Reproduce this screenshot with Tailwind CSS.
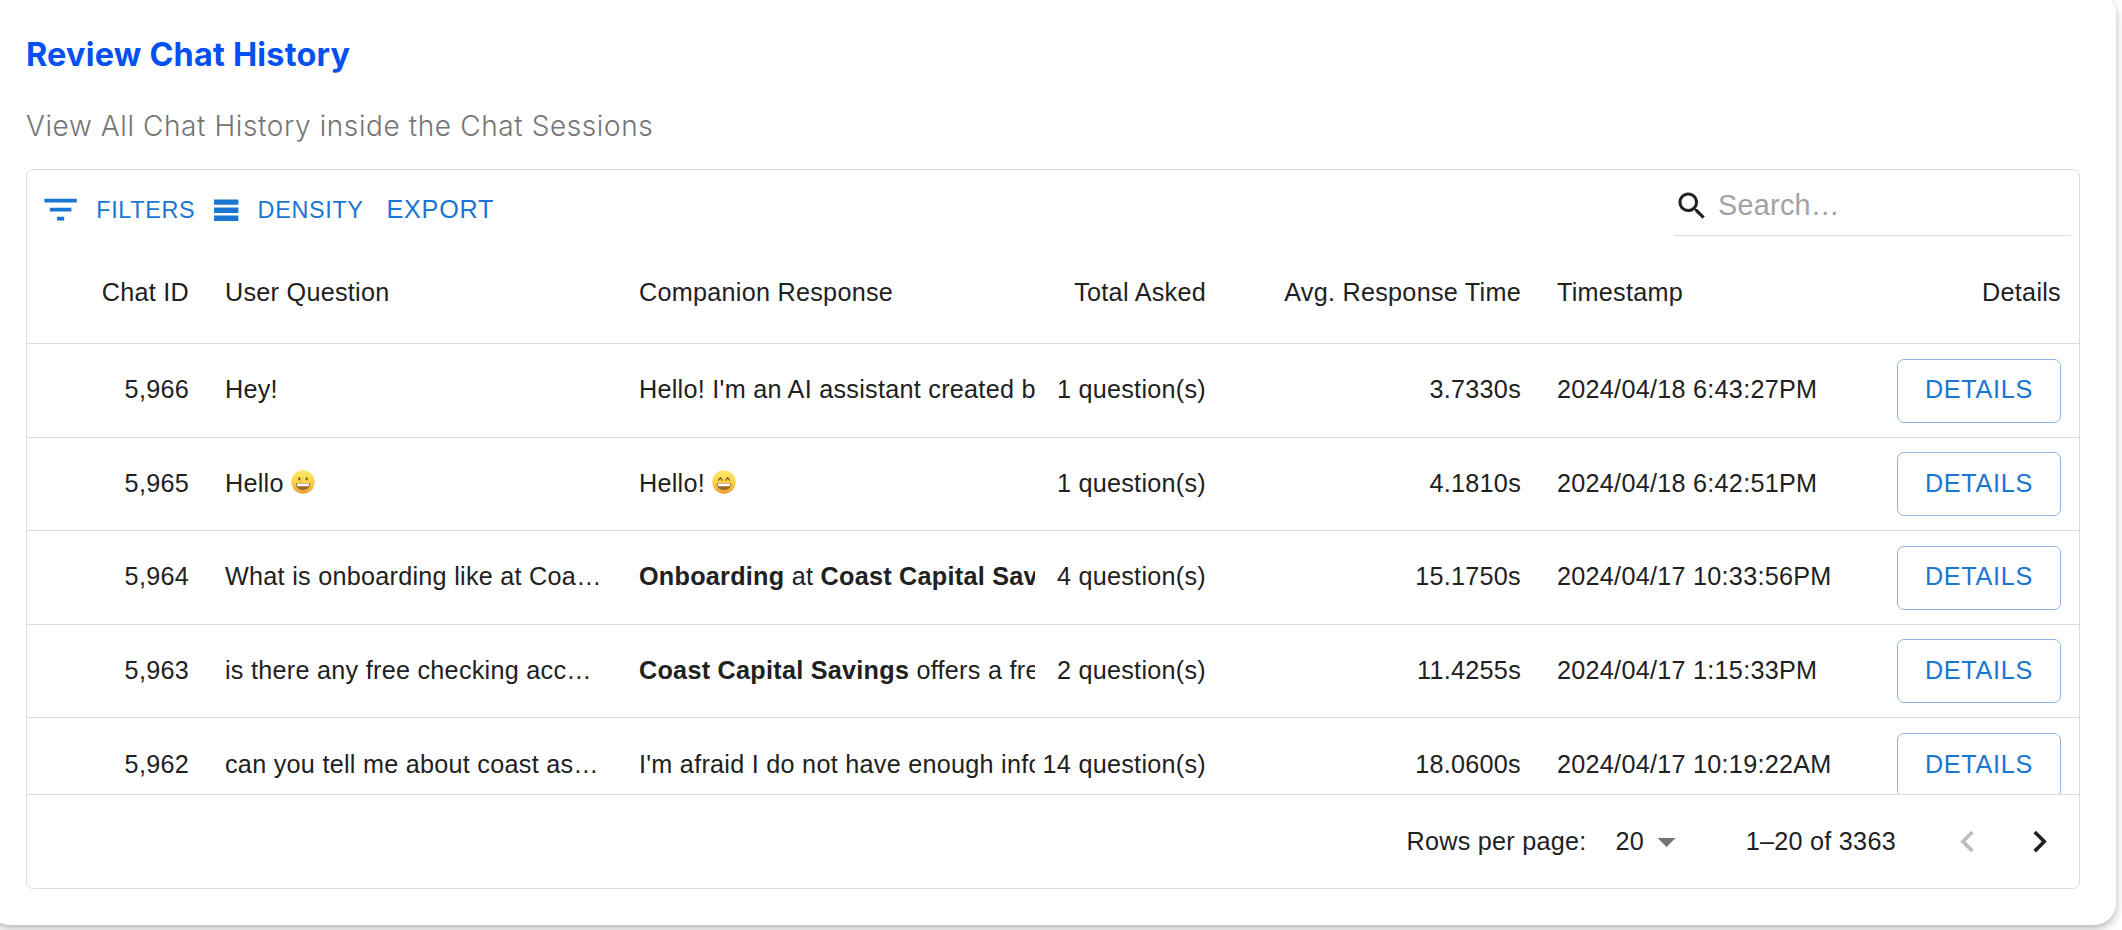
<!DOCTYPE html>
<html lang="en">
<head>
<meta charset="utf-8">
<title>Review Chat History</title>
<script src="https://cdn.jsdelivr.net/npm/@tailwindcss/browser@4"></script>
</head>
<body class="bg-white overflow-hidden">
<div class="w-[2122px] h-[930px] overflow-hidden flex flex-col">
<main class="-ml-3 -mt-2 shrink-0 w-[2128px] h-[933px] rounded-[22px] bg-white pl-[38px] pt-2 shadow-[0_4px_9px_rgba(0,0,0,0.28)] font-['Liberation_Sans',Arial,sans-serif] text-[25.2px] tracking-[0.27px] text-[#212121]">
  <h1 class="pt-[35px] h-[106px] leading-[40px] font-['Inter',sans-serif] font-bold text-[32.4px] tracking-[0.22px] text-[#0550f0]">Review Chat History</h1>
  <p class="h-[63px] leading-[41px] font-['Inter',sans-serif] font-light text-[28px] tracking-[0.6px] text-[#757575]">View All Chat History inside the Chat Sessions</p>
  <section class="w-[2054px] h-[720px] border border-[#dcdcdc] rounded-[7px] flex flex-col overflow-hidden">
    <div class="h-[72px] shrink-0 flex justify-between">
      <div class="flex items-center h-[80px] pl-3 text-[23.4px] tracking-[0.67px] text-[#1976d2]">
        <svg class="size-[43.2px] shrink-0" viewBox="0 0 24 24" fill="currentColor"><path d="M10 18h4v-2h-4v2zM3 6v2h18V6H3zm3 7h12v-2H6v2z"/></svg>
        <span class="ml-[14px] w-[114px] pt-px">FILTERS</span>
        <svg class="size-[32.4px] shrink-0" viewBox="0 0 24 24" fill="currentColor"><path d="M21 8H3V4h18v4zm0 2H3v4h18v-4zm0 6H3v4h18v-4z"/></svg>
        <span class="ml-[15px] w-[129px] pt-px">DENSITY</span>
        <span class="text-[25.2px] tracking-[0.72px]">EXPORT</span>
      </div>
      <div class="mr-[8px] w-[397px] h-[66px] border-b border-[#dcdcdc] flex items-center pt-[6px]">
        <svg class="size-9 shrink-0" viewBox="0 0 24 24" fill="currentColor"><path d="M15.5 14h-.79l-.28-.27C15.41 12.59 16 11.11 16 9.5 16 5.91 13.09 3 9.5 3S3 5.91 3 9.5 5.91 16 9.5 16c1.61 0 3.09-.59 4.23-1.57l.27.28v.79l5 4.99L20.49 19l-4.99-5zm-6 0C7.01 14 5 11.99 5 9.5S7.01 5 9.5 5 14 7.01 14 9.5 11.99 14 9.5 14z"/></svg>
        <span class="ml-[8px] text-[28.8px] text-[#a2a2a2]">Search…</span>
      </div>
    </div>
    <div class="h-[102px] shrink-0 grid grid-cols-[180px_414px_414px_189px_315px_310px_1fr] items-center border-b border-[#dcdcdc]">
      <span class="pr-[18px] text-right">Chat ID</span>
      <span class="pl-[18px]">User Question</span>
      <span class="pl-[18px]">Companion Response</span>
      <span class="pr-[18px] text-right">Total Asked</span>
      <span class="pr-[18px] text-right">Avg. Response Time</span>
      <span class="pl-[18px]">Timestamp</span>
      <span class="pr-[18px] text-right">Details</span>
    </div>
    <div id="rows" class="h-[450px] shrink-0 overflow-hidden"></div>
    <div class="flex-1 border-t border-[#dcdcdc] flex items-center justify-end">
      <span class="w-[209px]">Rows per page:</span>
      <span class="w-[30px]">20</span>
      <svg class="size-[43.2px] shrink-0 text-[#757575]" viewBox="0 0 24 24" fill="currentColor"><path d="m7 10 5 5 5-5z"/></svg>
      <span class="ml-[57px] w-[200px]">1–20 of 3363</span>
      <svg class="size-[43.2px] shrink-0 text-[#bdbdbd]" viewBox="0 0 24 24" fill="currentColor"><path d="M15.41 7.41 14 6l-6 6 6 6 1.41-1.41L10.83 12z"/></svg>
      <svg class="ml-[29px] mr-[18px] size-[43.2px] shrink-0" viewBox="0 0 24 24" fill="currentColor"><path d="M10 6 8.59 7.41 13.17 12l-4.58 4.59L10 18l6-6z"/></svg>
    </div>
  </section>
</main>
<svg class="size-0" aria-hidden="true">
  <defs>
    <linearGradient id="face" x1="0" y1="0" x2="0" y2="1"><stop offset="0" stop-color="#fdea6b"/><stop offset=".55" stop-color="#fbcf45"/><stop offset="1" stop-color="#ee9a35"/></linearGradient>
  </defs>
</svg>
</div>
<template id="grin"><svg class="inline-block size-[24px] -mt-[5px]" viewBox="0 0 24 24"><circle cx="12" cy="12" r="11.7" fill="url(#face)"/><ellipse cx="8.3" cy="8.8" rx="1.1" ry="1.6" fill="#7a5220"/><ellipse cx="15.7" cy="8.8" rx="1.1" ry="1.6" fill="#7a5220"/><path d="M4.800 13h14.400c0 4.400-3 7-7.200 7s-7.200-2.600-7.200-7z" fill="#9a6a2a"/><path d="M5.600 13.500h12.800l-.7 2.700H6.300z" fill="#fff"/></svg></template>
<template id="beam"><svg class="inline-block size-[24px] -mt-[5px]" viewBox="0 0 24 24"><circle cx="12" cy="12" r="11.7" fill="url(#face)"/><path d="M6.500 10.200 8.300 7.600l1.800 2.600M13.900 10.200l1.800-2.600 1.800 2.600" fill="none" stroke="#7a5220" stroke-width="1.200" stroke-linecap="round" stroke-linejoin="round"/><path d="M4.800 13h14.400c0 4.400-3 7-7.200 7s-7.200-2.600-7.200-7z" fill="#9a6a2a"/><path d="M5.600 13.500h12.800l-.7 2.700H6.300z" fill="#fff"/></svg></template>
<script>
const grin = document.getElementById('grin').innerHTML;
const beam = document.getElementById('beam').innerHTML;
const rows = [
  ['5,966', 'Hey!', "Hello! I'm an AI assistant created by", '1', '3.7330s', '2024/04/18 6:43:27PM', 'h-[94px]'],
  ['5,965', 'Hello ' + grin, 'Hello! ' + beam, '1', '4.1810s', '2024/04/18 6:42:51PM', 'h-[93px]'],
  ['5,964', 'What is onboarding like at Coast Capital', '<b>Onboarding</b> at <b>Coast Capital Savings</b>', '4', '15.1750s', '2024/04/17 10:33:56PM', 'h-[94px]'],
  ['5,963', 'is there any free checking account', '<b>Coast Capital Savings</b> offers a free', '2', '11.4255s', '2024/04/17 1:15:33PM', 'h-[93px]'],
  ['5,962', 'can you tell me about coast assets', "I'm afraid I do not have enough information", '14', '18.0600s', '2024/04/17 10:19:22AM', 'h-[95px]'],
];
document.getElementById('rows').innerHTML = rows.map(r => `
  <div class="${r[6]} grid grid-cols-[180px_414px_414px_189px_315px_310px_1fr] items-center border-b border-[#dcdcdc] whitespace-nowrap">
    <span class="pr-[18px] pb-px text-right">${r[0]}</span>
    <span class="mx-[18px] pb-px truncate">${r[1]}</span>
    <span class="ml-[18px] pb-px overflow-hidden">${r[2]}</span>
    <span class="pr-[18px] pb-px text-right">${r[3]} question(s)</span>
    <span class="pr-[18px] pb-px text-right">${r[4]}</span>
    <span class="pl-[18px] pb-px">${r[5]}</span>
    <span class="pr-[18px] flex justify-end"><button class="w-[164px] h-[64px] pb-px rounded-[7px] border border-[#8fb4e2] tracking-[0.72px] text-[#1976d2]">DETAILS</button></span>
  </div>`).join('');
</script>
</body>
</html>
